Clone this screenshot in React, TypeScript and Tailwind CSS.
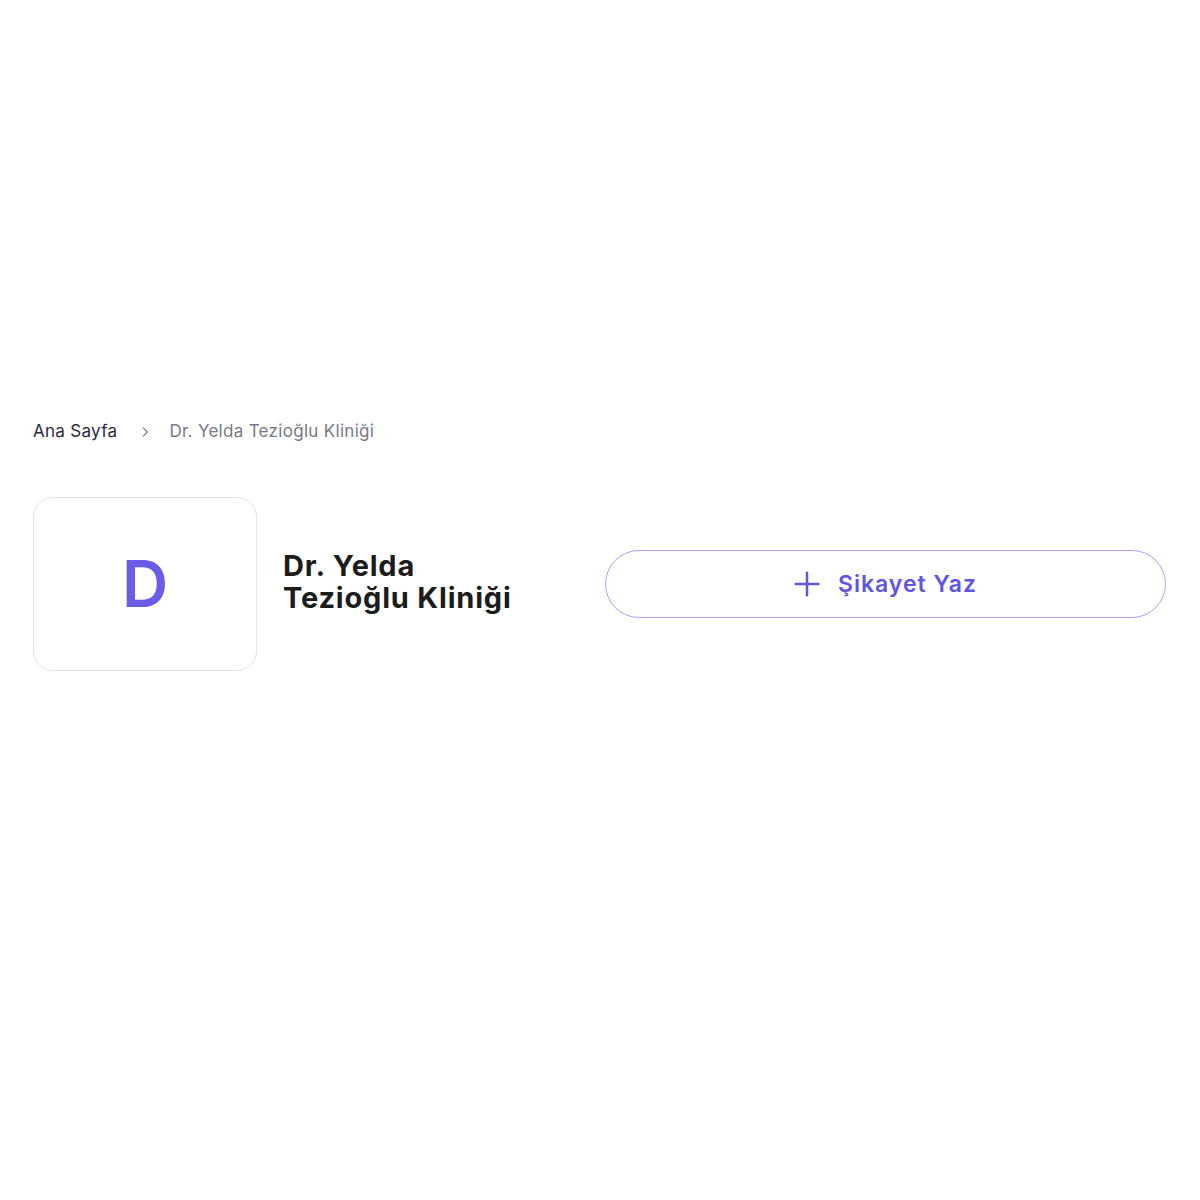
import React from "react";

export default function App() {
  return (
    <div
      className="w-[1200px] h-[1200px] bg-white"
      style={{ fontFamily: "Inter, 'Noto Sans', sans-serif" }}
    >
      <div className="pt-[420px] px-[33px]">
        <nav className="flex items-center h-[24px] text-[17px] tracking-[0.3px]">
          <span className="text-[#2a2a3a]">Ana Sayfa</span>
          <svg
            className="ml-[21px] mr-[17px]"
            width="14"
            height="14"
            viewBox="0 0 24 24"
            fill="none"
            stroke="#7c7c88"
            strokeWidth="2"
            strokeLinecap="round"
            strokeLinejoin="round"
          >
            <path d="M9 5l7 7-7 7" />
          </svg>
          <span className="text-[#7a7a86]">Dr. Yelda Tezioğlu Kliniği</span>
        </nav>
        <div className="flex items-center mt-[53px]">
          <div className="w-[224px] h-[174px] shrink-0 rounded-[20px] border border-[#e3e3ea] flex items-center justify-center">
            <span className="text-[#6b5ce7] text-[64px] font-semibold leading-none">D</span>
          </div>
          <h1 className="ml-[26px] mb-[4px] w-[260px] text-[29px] leading-[32px] font-bold text-[#1c1c1c] tracking-[0.8px]">
            Dr. Yelda
            <br />
            Tezioğlu Kliniği
          </h1>
          <button className="ml-[62px] w-[561px] h-[68px] rounded-full border border-[#a5a3ff] flex items-center justify-center gap-[18px] text-[#5f54e4]">
            <svg width="26" height="26" viewBox="0 0 24 24" fill="none" stroke="currentColor" strokeWidth="2.3" strokeLinecap="round">
              <path d="M12 1.5v21M1.5 12h21" />
            </svg>
            <span className="text-[23px] font-semibold tracking-[1px]">Şikayet Yaz</span>
          </button>
        </div>
      </div>
    </div>
  );
}
